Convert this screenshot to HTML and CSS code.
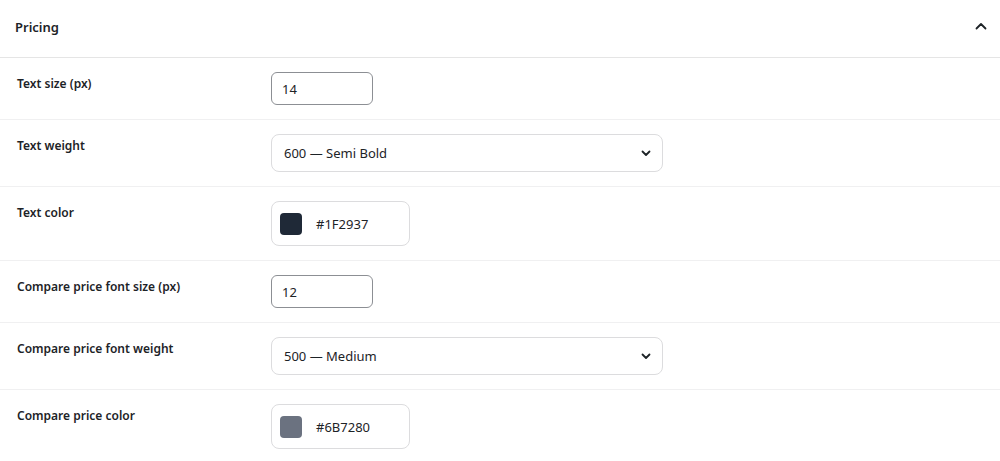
FILE: index.html
```html
<!DOCTYPE html>
<html lang="en">
<head>
  <meta charset="UTF-8" />
  <title>Pricing settings</title>
  <link rel="stylesheet" href="styles.css">
</head>
<body>
  <div class="panel">
    <!-- Section header -->
    <div class="panel-head">
      <h3>Pricing</h3>
      <svg class="chevron" width="14" height="14" viewBox="0 0 14 14">
        <path d="M2.5 9.5 L7 5 L11.5 9.5" fill="none" stroke="#1d2327" stroke-width="1.8" stroke-linecap="round" stroke-linejoin="round"/>
      </svg>
    </div>

    <div class="row">
      <label>Text size (px)</label>
      <input class="num" type="text" value="14" />
    </div>

    <div class="row">
      <label>Text weight</label>
      <div class="select">
        <span>600 — Semi Bold</span>
        <svg width="12" height="12" viewBox="0 0 12 12"><path d="M2.5 4.5 L6 8 L9.5 4.5" fill="none" stroke="#1d2327" stroke-width="1.8" stroke-linecap="round" stroke-linejoin="round"/></svg>
      </div>
    </div>

    <div class="row">
      <label>Text color</label>
      <div class="color">
        <span class="swatch dark"></span>
        <span>#1F2937</span>
      </div>
    </div>

    <div class="row">
      <label>Compare price font size (px)</label>
      <input class="num" type="text" value="12" />
    </div>

    <div class="row">
      <label>Compare price font weight</label>
      <div class="select">
        <span>500 — Medium</span>
        <svg width="12" height="12" viewBox="0 0 12 12"><path d="M2.5 4.5 L6 8 L9.5 4.5" fill="none" stroke="#1d2327" stroke-width="1.8" stroke-linecap="round" stroke-linejoin="round"/></svg>
      </div>
    </div>

    <div class="row">
      <label>Compare price color</label>
      <div class="color">
        <span class="swatch gray"></span>
        <span>#6B7280</span>
      </div>
    </div>
  </div>
</body>
</html>
```

FILE: styles.css
```css
* {
  box-sizing: border-box;
}

body {
  margin: 0;
  background: #fff;
  font-family: "Noto Sans", "Open Sans", sans-serif;
  color: #1d2327;
}

.panel {
  width: 100%;
}

.panel-head {
  display: flex;
  align-items: center;
  justify-content: space-between;
  height: 58px;
  padding: 0 12px 0 15px;
  border-bottom: 1px solid #e5e5e5;
}

.panel-head h3 {
  margin: 0 0 4px;
  font-size: 13px;
  font-weight: 600;
}

.chevron {
  margin-bottom: 6px;
}

.row {
  display: flex;
  align-items: flex-start;
  padding: 14px 0 14px 17px;
  border-bottom: 1px solid #f0f0f1;
}

.row label {
  width: 254px;
  margin-top: 3px;
  font-size: 12px;
  font-weight: 600;
}

.num {
  width: 102px;
  height: 33px;
  padding: 0 10px;
  border: 1px solid #8c8f94;
  border-radius: 6px;
  font-family: inherit;
  font-size: 13px;
  color: #1d2327;
}

.select {
  display: flex;
  align-items: center;
  justify-content: space-between;
  width: 392px;
  height: 38px;
  padding: 0 10px 0 12px;
  border: 1px solid #dcdcde;
  border-radius: 8px;
  font-size: 13px;
}

.color {
  display: flex;
  align-items: center;
  gap: 14px;
  width: 139px;
  height: 45px;
  padding: 0 8px;
  border: 1px solid #dcdcde;
  border-radius: 8px;
  font-size: 13px;
}

.swatch {
  width: 22px;
  height: 22px;
  border-radius: 4px;
}

.swatch.dark {
  background: #1f2937;
}

.swatch.gray {
  background: #6b7280;
}
```
